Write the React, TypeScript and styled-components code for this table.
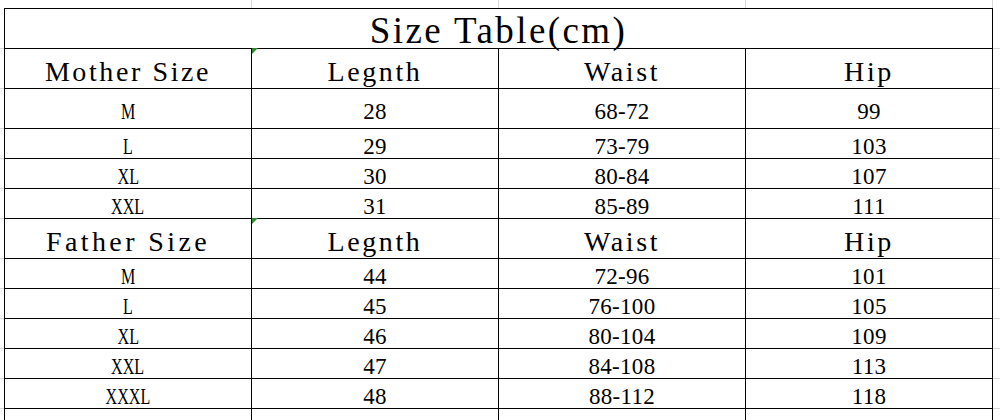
import * as React from "react";
import styled, { createGlobalStyle } from "styled-components";

type RowKind = "title" | "head" | "data" | "empty";

type SheetRow = {
  h: number;
  kind: RowKind;
  cells?: string[];
};

const SERIF = `"Liberation Serif", "Times New Roman", serif`;
const GRID = "#d6d6d6";
const LINE = "#000000";

const GlobalStyle = createGlobalStyle`
  html, body {
    margin: 0;
    padding: 0;
    background: #ffffff;
    font-family: ${SERIF};
  }
`;

const Sheet = styled.div<{ $rows: string }>`
  width: 1000px;
  height: 420px;
  overflow: hidden;
  display: grid;
  grid-template-columns: 4px 248px 247px 247px 247px 1fr;
  grid-template-rows: ${(p) => p.$rows};
  font-family: ${SERIF};
  color: #000000;
  background: #ffffff;
`;

const Corner = styled.div``;

const TopCell = styled.div`
  border-right: 1px solid ${GRID};
`;

const GutterCell = styled.div`
  border-bottom: 1px solid ${GRID};
`;

const Cell = styled.div<{ $first?: boolean; $top?: boolean; $span?: number; $flag?: boolean }>`
  position: relative;
  display: flex;
  align-items: center;
  justify-content: center;
  box-sizing: border-box;
  grid-column: ${(p) => (p.$span ? `span ${p.$span}` : "auto")};
  border-right: 1px solid ${LINE};
  border-bottom: 1px solid ${LINE};
  border-left: ${(p) => (p.$first ? `1px solid ${LINE}` : "none")};
  border-top: ${(p) => (p.$top ? `1px solid ${LINE}` : "none")};
  white-space: nowrap;

  &::before {
    content: "";
    display: ${(p) => (p.$flag ? "block" : "none")};
    position: absolute;
    top: -1px;
    left: 0;
    width: 0;
    height: 0;
    border-top: 6px solid #2f8a2a;
    border-right: 6px solid transparent;
  }
`;

const TitleText = styled.span`
  font-family: ${SERIF};
  font-size: 37px;
  line-height: 1;
  letter-spacing: 2.4px;
  padding-top: 3px;
`;

const HeadText = styled.span<{ $ls?: number }>`
  font-family: ${SERIF};
  font-size: 28px;
  line-height: 1;
  letter-spacing: ${(p) => p.$ls ?? 2.6}px;
  padding-top: 7px;
`;

const DataText = styled.span`
  font-family: ${SERIF};
  font-size: 23px;
  line-height: 1;
  letter-spacing: 0.3px;
  padding-top: 6px;
`;

const SizeLabel = styled(DataText)`
  display: inline-block;
  letter-spacing: 0;
  transform: scaleX(0.7);
`;

const rows: SheetRow[] = [
  { h: 41, kind: "title" },
  { h: 40, kind: "head", cells: ["Mother Size", "Legnth", "Waist", "Hip"] },
  { h: 40, kind: "data", cells: ["M", "28", "68-72", "99"] },
  { h: 30, kind: "data", cells: ["L", "29", "73-79", "103"] },
  { h: 30, kind: "data", cells: ["XL", "30", "80-84", "107"] },
  { h: 30, kind: "data", cells: ["XXL", "31", "85-89", "111"] },
  { h: 40, kind: "head", cells: ["Father Size", "Legnth", "Waist", "Hip"] },
  { h: 30, kind: "data", cells: ["M", "44", "72-96", "101"] },
  { h: 30, kind: "data", cells: ["L", "45", "76-100", "105"] },
  { h: 30, kind: "data", cells: ["XL", "46", "80-104", "109"] },
  { h: 30, kind: "data", cells: ["XXL", "47", "84-108", "113"] },
  { h: 30, kind: "data", cells: ["XXXL", "48", "88-112", "118"] },
  { h: 30, kind: "empty" },
];

const renderCells = (row: SheetRow, r: number) => {
  if (row.kind === "title") {
    return (
      <Cell key={`c${r}`} $first $top $span={4}>
        <TitleText>Size Table(cm)</TitleText>
      </Cell>
    );
  }
  if (row.kind === "empty") {
    return [0, 1, 2, 3].map((i) => <Cell key={`c${r}-${i}`} $first={i === 0} />);
  }
  return (row.cells || []).map((text, i) => {
    let content: React.ReactNode;
    if (row.kind === "head") {
      content = <HeadText $ls={text === "Father Size" ? 3.4 : 2.6}>{text}</HeadText>;
    } else if (i === 0) content = <SizeLabel>{text}</SizeLabel>;
    else content = <DataText>{text}</DataText>;
    return (
      <Cell key={`c${r}-${i}`} $first={i === 0} $flag={row.kind === "head" && i === 1}>
        {content}
      </Cell>
    );
  });
};

export default function App() {
  const template = ["8px", ...rows.map((r) => `${r.h}px`)].join(" ");

  return (
    <>
      <GlobalStyle />
      <Sheet $rows={template}>
        <Corner />
        <TopCell />
        <TopCell />
        <TopCell />
        <TopCell />
        <Corner />
        {rows.map((row, r) => (
          <React.Fragment key={r}>
            <GutterCell />
            {renderCells(row, r)}
            <GutterCell />
          </React.Fragment>
        ))}
      </Sheet>
    </>
  );
}
